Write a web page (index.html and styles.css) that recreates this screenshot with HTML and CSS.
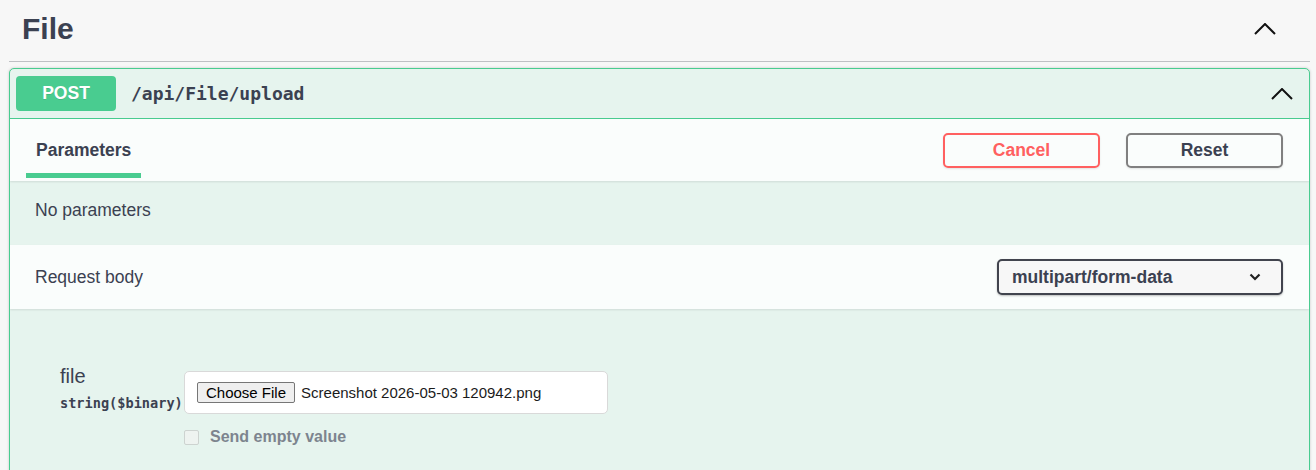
FILE: index.html
```html
<!DOCTYPE html>
<html lang="en">
<head>
<meta charset="utf-8">
<title>File API</title>
<link rel="stylesheet" href="styles.css">
</head>
<body>
<div class="page">
  <section class="tag">
    <h3 class="tag-title">File</h3>
    <svg class="chev-up tag-chev" width="22" height="12" viewBox="0 0 22 12" aria-hidden="true"><polyline points="1,11 11,1 21,11"/></svg>
  </section>

  <div class="opblock">
    <div class="summary">
      <span class="method">POST</span>
      <span class="path">/api/File/upload</span>
      <svg class="chev-up op-chev" width="22" height="12" viewBox="0 0 22 12" aria-hidden="true"><polyline points="1,11 11,1 21,11"/></svg>
    </div>

    <div class="section-header tabs">
      <div class="tab active"><span class="tab-label">Parameters</span></div>
      <div class="actions">
        <button class="btn cancel" type="button">Cancel</button>
        <button class="btn reset" type="button">Reset</button>
      </div>
    </div>

    <div class="description">No parameters</div>

    <div class="section-header body-header">
      <span class="header-label">Request body</span>
      <div class="select">
        <span>multipart/form-data</span>
        <svg class="chev-down" width="12" height="8" viewBox="0 0 12 8" aria-hidden="true"><polyline points="1.5,1.5 6,6 10.5,1.5"/></svg>
      </div>
    </div>

    <div class="request-body">
      <div class="param">
        <div class="param-info">
          <div class="param-name">file</div>
          <div class="param-type">string($binary)</div>
        </div>
        <div class="param-value">
          <div class="file-box">
            <button class="file-btn" type="button">Choose File</button>
            <span class="file-name">Screenshot 2026-05-03 120942.png</span>
          </div>
          <label class="empty-toggle"><span class="checkbox"></span>Send empty value</label>
        </div>
      </div>
    </div>
  </div>
</div>
</body>
</html>
```

FILE: styles.css
```css
html, body {
  margin: 0;
  padding: 0;
  background: #f7f7f7;
}

body {
  font-family: "Liberation Sans", Arial, sans-serif;
  color: #3b4151;
  overflow: hidden;
}

.page {
  padding: 0 6px 0 9px;
}

/* Tag heading */
.tag {
  display: flex;
  align-items: center;
  justify-content: space-between;
  height: 57px;
  padding: 0 34px 4px 13px;
  border-bottom: 1px solid rgba(59, 65, 81, 0.3);
  margin-bottom: 6px;
}

.tag-title {
  margin: 0;
  font-size: 30px;
  font-weight: 700;
  line-height: 36px;
  color: #3b4151;
}

.chev-up polyline,
.chev-down polyline {
  fill: none;
  stroke: #111;
  stroke-width: 2;
}

.chev-down polyline {
  stroke: #222;
  stroke-width: 2.2;
}

/* Operation block */
.opblock {
  border: 1px solid #49cc90;
  border-radius: 5px;
  background: #e6f4ee;
  box-shadow: 0 0 3px rgba(0, 0, 0, 0.19);
  overflow: hidden;
}

.summary {
  display: flex;
  align-items: center;
  height: 49px;
  padding: 0 16px 0 6px;
  border-bottom: 1px solid #49cc90;
}

.method {
  display: flex;
  align-items: center;
  justify-content: center;
  width: 100px;
  height: 35px;
  border-radius: 4px;
  background: #49cc90;
  color: #fff;
  font-size: 17.5px;
  font-weight: 700;
  text-shadow: 0 1px 0 rgba(0, 0, 0, 0.1);
}

.path {
  flex: 1;
  padding-left: 15px;
  font-family: "DejaVu Sans Mono", "Liberation Mono", monospace;
  font-size: 18px;
  font-weight: 700;
  color: #3b4151;
}

/* Section headers */
.section-header {
  display: flex;
  align-items: center;
  justify-content: space-between;
  background: rgba(255, 255, 255, 0.8);
  box-shadow: 0 1px 2px rgba(0, 0, 0, 0.1);
  position: relative;
}

.tabs {
  height: 62px;
  padding: 0 26px 0 16px;
}

.tab {
  position: relative;
  padding: 0 10px;
  font-size: 17.5px;
  font-weight: 700;
  line-height: 20px;
}

.tab.active::after {
  content: "";
  position: absolute;
  left: 0;
  right: 0;
  bottom: -18px;
  height: 5px;
  background: #49cc90;
}

.actions {
  display: flex;
  gap: 26px;
}

.btn {
  width: 157px;
  height: 35px;
  border: 2px solid #808080;
  border-radius: 5px;
  background: transparent;
  font-family: "Liberation Sans", Arial, sans-serif;
  font-size: 17.5px;
  font-weight: 700;
  color: #3b4151;
  box-shadow: 0 1px 2px rgba(0, 0, 0, 0.1);
  padding: 0;
}

.btn.cancel {
  border-color: #ff6060;
  color: #ff6060;
}

.description {
  height: 64px;
  box-sizing: border-box;
  padding: 19px 25px 0;
  font-size: 17.5px;
  line-height: 20px;
}

.body-header {
  height: 64px;
  padding: 0 26px 0 25px;
}

.header-label {
  font-size: 17.5px;
  line-height: 20px;
}

.select {
  display: flex;
  align-items: center;
  justify-content: space-between;
  box-sizing: border-box;
  width: 286px;
  height: 36px;
  padding: 0 20px 0 13px;
  border: 2px solid #41444e;
  border-radius: 5px;
  background: #f7f7f7;
  box-shadow: 0 1px 2px rgba(0, 0, 0, 0.25);
  font-size: 17.5px;
  font-weight: 700;
}

/* Request body form */
.request-body {
  height: 200px;
  padding: 55px 0 0 50px;
}

.param {
  display: grid;
  grid-template-columns: 124px auto;
  align-items: start;
}

.param-name {
  font-size: 20px;
  line-height: 24px;
}

.param-type {
  margin-top: 7px;
  font-family: "DejaVu Sans Mono", "Liberation Mono", monospace;
  font-size: 13.6px;
  font-weight: 700;
  line-height: 16px;
}

.param-value {
  padding-top: 7px;
}

.file-box {
  display: flex;
  align-items: center;
  width: 424px;
  height: 43px;
  box-sizing: border-box;
  padding: 0 12px;
  border: 1px solid #d9d9d9;
  border-radius: 5px;
  background: #fff;
}

.file-btn {
  height: 21px;
  padding: 0 8px;
  border: 1px solid #767676;
  border-radius: 2px;
  background: #efefef;
  font-family: "Liberation Sans", Arial, sans-serif;
  font-size: 15px;
  line-height: 19px;
  color: #000;
}

.file-name {
  margin-left: 6px;
  font-size: 15px;
  color: #1b1b1b;
}

.empty-toggle {
  display: flex;
  align-items: center;
  margin-top: 14px;
  font-size: 16px;
  font-weight: 700;
  color: #7d848e;
}

.checkbox {
  width: 13px;
  height: 13px;
  margin-right: 11px;
  border: 1px solid #cdd3d0;
  border-radius: 2px;
  background: #eef3f0;
}
```
